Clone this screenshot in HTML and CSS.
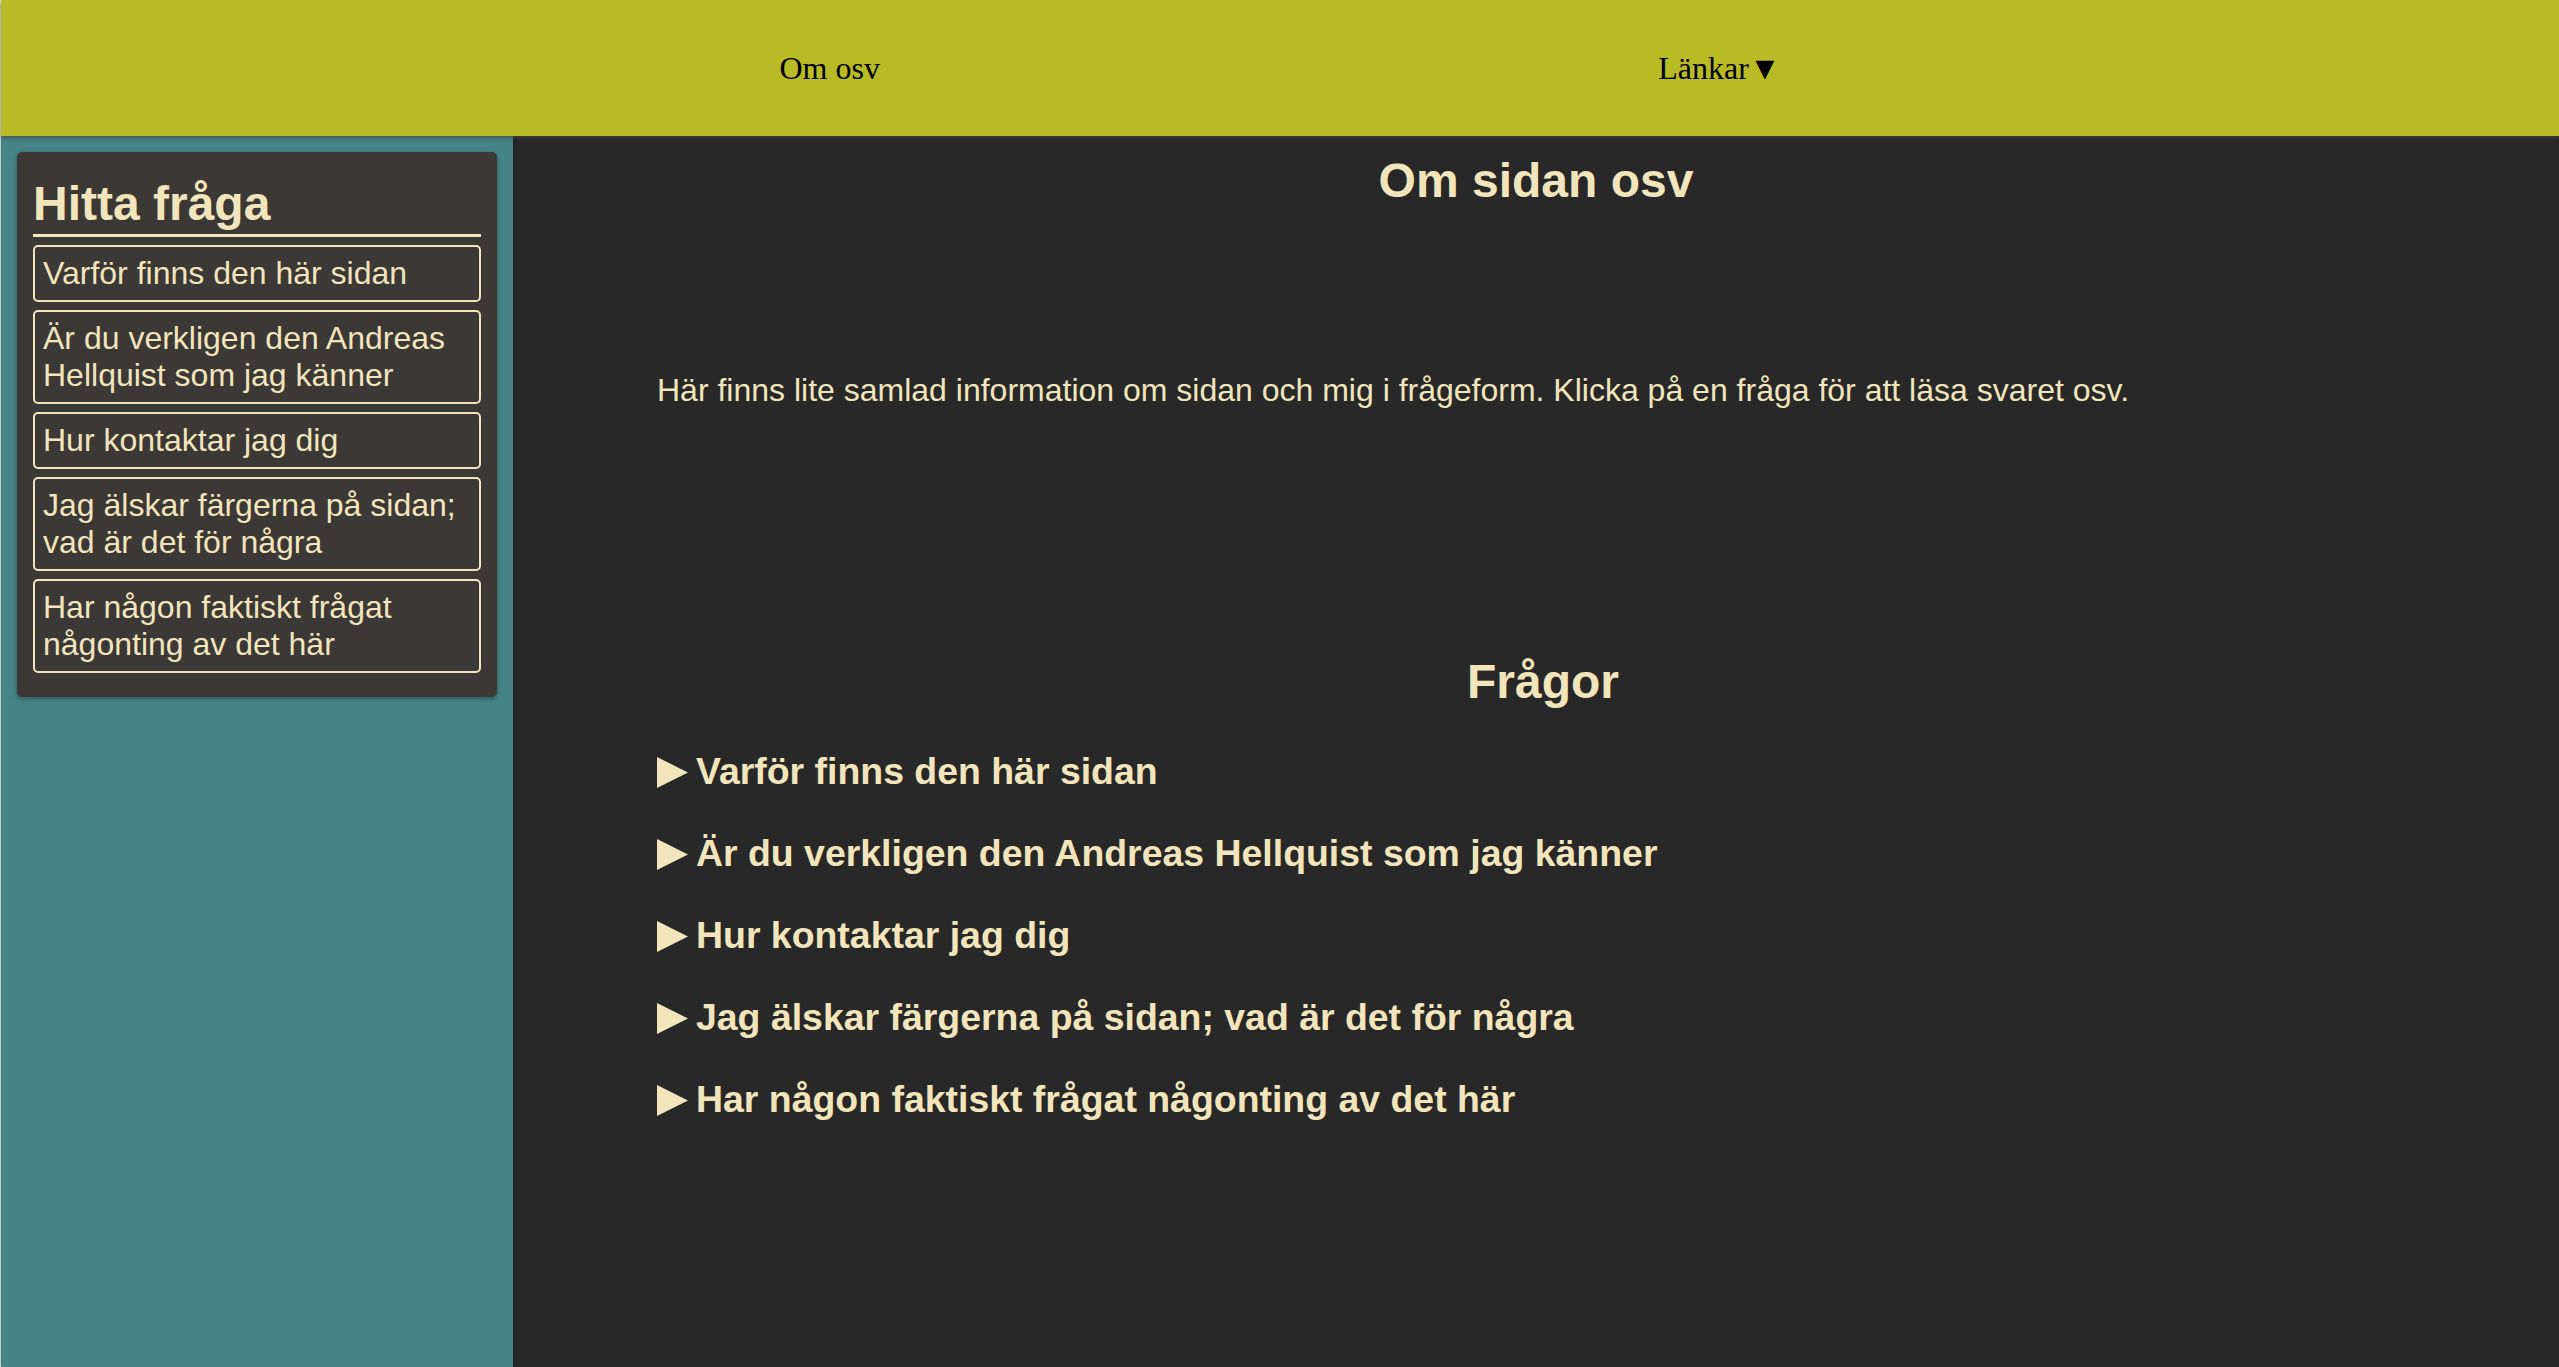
FILE: index.html
```html
<!DOCTYPE html>
<html lang="sv">
<head>
<meta charset="utf-8">
<title>Om sidan osv</title>
<link rel="stylesheet" href="styles.css">
</head>
<body>
<div class="page">
  <header class="topbar">
    <nav class="nav">
      <a class="nav-link" href="#">Om osv</a>
      <span class="nav-link">Länkar▼</span>
    </nav>
  </header>
  <div class="layout">
    <aside class="sidebar">
      <div class="card">
        <h2 class="card-title">Hitta fråga</h2>
        <ul class="q-list">
          <li><a class="q-link" href="#q1">Varför finns den här sidan</a></li>
          <li><a class="q-link" href="#q2">Är du verkligen den Andreas Hellquist som jag känner</a></li>
          <li><a class="q-link" href="#q3">Hur kontaktar jag dig</a></li>
          <li><a class="q-link" href="#q4">Jag älskar färgerna på sidan; vad är det för några</a></li>
          <li><a class="q-link" href="#q5">Har någon faktiskt frågat någonting av det här</a></li>
        </ul>
      </div>
    </aside>
    <main class="main">
      <h1 class="page-title">Om sidan osv</h1>
      <div class="content">
        <p class="intro">Här finns lite samlad information om sidan och mig i frågeform. Klicka på en fråga för att läsa svaret osv.</p>
        <h2 class="section-title">Frågor</h2>
        <details class="faq" id="q1"><summary class="faq-q"><span class="tri"></span>Varför finns den här sidan</summary></details>
        <details class="faq" id="q2"><summary class="faq-q"><span class="tri"></span>Är du verkligen den Andreas Hellquist som jag känner</summary></details>
        <details class="faq" id="q3"><summary class="faq-q"><span class="tri"></span>Hur kontaktar jag dig</summary></details>
        <details class="faq" id="q4"><summary class="faq-q"><span class="tri"></span>Jag älskar färgerna på sidan; vad är det för några</summary></details>
        <details class="faq" id="q5"><summary class="faq-q"><span class="tri"></span>Har någon faktiskt frågat någonting av det här</summary></details>
      </div>
    </main>
  </div>
</div>
</body>
</html>
```

FILE: styles.css
```css
html, body {
  margin: 0;
  padding: 0;
  height: 100%;
}

body {
  background: #dde4e6;
  padding-left: 1px;
  box-sizing: border-box;
  font-family: "Liberation Sans", Arial, sans-serif;
  font-size: 32px;
  color: #f2e5bc;
  overflow: hidden;
}

.page {
  display: flex;
  flex-direction: column;
  height: 100vh;
}

.topbar {
  position: relative;
  z-index: 3;
  height: 136px;
  flex: 0 0 136px;
  background: #b8bb26;
  box-shadow: 0 2px 4px rgba(72, 66, 62, 0.75);
  display: flex;
  align-items: center;
}

.nav {
  flex: 1;
  display: flex;
  justify-content: space-evenly;
  align-items: center;
  font-family: "Liberation Serif", "Times New Roman", serif;
  font-size: 32px;
}

.nav-link {
  color: #000;
  text-decoration: none;
}

.layout {
  flex: 1;
  display: grid;
  grid-template-columns: 512px 1fr;
  min-height: 0;
}

.sidebar {
  position: relative;
  z-index: 2;
  background: #458588;
  padding: 16px;
  box-shadow: 1px 0 3px rgba(20, 20, 20, 0.6);
}

.card {
  background: #3c3836;
  border-radius: 5px;
  padding: 16px 16px 16px;
  box-shadow: 0 2px 5px rgba(0, 0, 0, 0.35);
}

.card-title {
  margin: 8px 0 8px;
  padding-bottom: 3px;
  border-bottom: 3px solid #f2e5bc;
  font-size: 48px;
  font-weight: bold;
}

.q-list {
  list-style: none;
  margin: 0;
  padding: 0;
}

.q-list li {
  margin-bottom: 8px;
}

.q-link {
  display: block;
  border: 2px solid #f2e5bc;
  border-radius: 5px;
  padding: 8px;
  color: #f2e5bc;
  text-decoration: none;
  font-size: 32px;
}

.main {
  background: #282828;
  min-height: 0;
}

.page-title {
  margin: 17px 0 0;
  text-align: center;
  font-size: 48px;
  font-weight: bold;
}

.content {
  padding: 0 130px 0 144px;
}

.intro {
  margin: 164px 0 0;
  font-size: 32px;
}

.section-title {
  margin: 245px 0 0;
  text-align: center;
  font-size: 48px;
  font-weight: bold;
}

.faq {
  margin-top: 39px;
}

.faq:first-of-type {
  margin-top: 41px;
}

.faq-q {
  list-style: none;
  display: flex;
  align-items: flex-start;
  font-size: 37.44px;
  font-weight: bold;
  cursor: pointer;
}

.faq-q::-webkit-details-marker {
  display: none;
}

.tri {
  flex: 0 0 31px;
  width: 31px;
  height: 31px;
  margin: 7px 8px 0 0;
  background: #f2e5bc;
  clip-path: polygon(0 0, 100% 50%, 0 100%);
}
```
